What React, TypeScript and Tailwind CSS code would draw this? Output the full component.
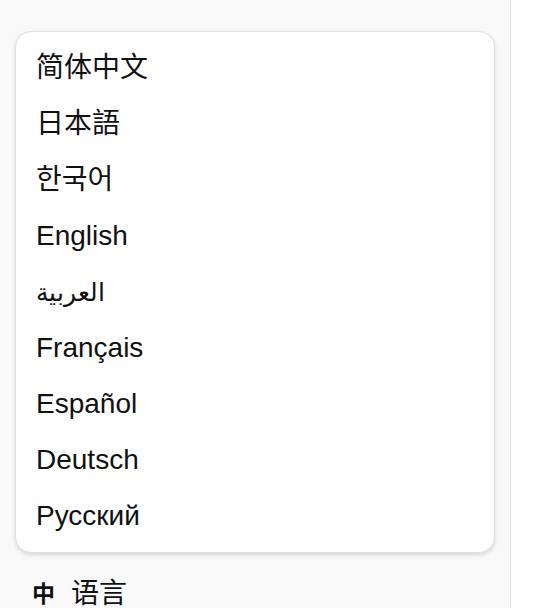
import React from 'react';

const LANGS = [
  { label: '简体中文' },
  { label: '日本語' },
  { label: '한국어' },
  { label: 'English' },
  { label: 'العربية', small: true },
  { label: 'Français' },
  { label: 'Español' },
  { label: 'Deutsch' },
  { label: 'Русский' },
];

const FONT = "font-['Liberation_Sans','Noto_Sans_CJK_SC','Noto_Sans_CJK_JP','Noto_Sans_CJK_KR','Noto_Sans',sans-serif]";

export default function App() {
  return (
    <div className={`flex h-[608px] w-[544px] overflow-hidden bg-white text-[#111] ${FONT}`}>
      <aside className="flex h-full w-[511px] shrink-0 flex-col border-r border-[#e3e3e3] bg-[#f9f9f9] pl-[15px] pr-[15px] pt-[31px]">
        <div className="rounded-2xl border border-[#e0e0e0] bg-white py-2 shadow-[0_2px_4px_rgba(0,0,0,0.14)]">
          {LANGS.map((l) => (
            <div key={l.label} className="flex h-14 items-center px-5 leading-none">
              <span className={l.small ? 'text-[25px]' : 'text-[28px]'}>{l.label}</span>
            </div>
          ))}
        </div>
        <div className="mt-[27px] flex items-center gap-[16px] pl-[17px] text-[28px] leading-none">
          <span className="text-[23px] font-bold">中</span>
          <span>语言</span>
        </div>
      </aside>
      <main className="flex-1 bg-white" />
    </div>
  );
}
